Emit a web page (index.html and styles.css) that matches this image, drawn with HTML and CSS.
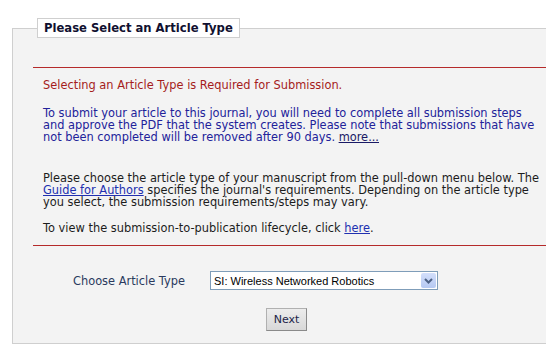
FILE: index.html
```html
<!DOCTYPE html>
<html lang="en">
<head>
    <meta charset="UTF-8">
    <title>Select Article Type</title>
    <link rel="stylesheet" href="styles.css">
</head>
<body>
    <fieldset class="panel">
        <legend>Please Select an Article Type</legend>
        <div class="notice">
            <p class="required">Selecting an Article Type is Required for Submission.</p>
            <p class="info">To submit your article to this journal, you will need to complete all submission steps and approve the PDF that the system creates. Please note that submissions that have not been completed will be removed after 90 days. <a href="#" class="more">more...</a></p>
            <p class="plain">Please choose the article type of your manuscript from the pull-down menu below. The <a href="#">Guide for Authors</a> specifies the journal's requirements. Depending on the article type you select, the submission requirements/steps may vary.</p>
            <p class="plain lifecycle">To view the submission-to-publication lifecycle, click <a href="#">here</a>.</p>
        </div>
        <form class="choose" onsubmit="event.preventDefault();">
            <div class="row">
                <label for="articleType">Choose Article Type</label>
                <div class="select">
                    <select id="articleType">
                        <option>SI: Wireless Networked Robotics</option>
                    </select>
                    <span class="arrow">
                        <svg width="9" height="6" viewBox="0 0 9 6"><path d="M1 1 L4.5 4.5 L8 1" fill="none" stroke="#4d6185" stroke-width="2"/></svg>
                    </span>
                </div>
            </div>
            <div class="actions">
                <button type="submit">Next</button>
            </div>
        </form>
    </fieldset>
</body>
</html>
```

FILE: styles.css
```css
body {
    margin: 0;
    background-color: #fff;
    font-family: "DejaVu Sans", Verdana, sans-serif;
    font-size: 11.4px;
    line-height: 12px;
}

.panel {
    margin: 18px 0 0 12px;
    padding: 0 0 12px 20px;
    border: 1px solid #cfcfcf;
    border-right: none;
    background-color: #f3f3f3;
}

.panel legend {
    margin-left: 4px;
    padding: 2px 6px 2px 6px;
    border: 1px solid #cfcfcf;
    background-color: #fff;
    color: #101030;
    font-size: 11.6px;
    font-weight: bold;
    line-height: 14px;
}

.notice {
    margin-top: 29px;
    padding: 11px 0 11px 10px;
    border-top: 1px solid #b52a2a;
    border-bottom: 1px solid #b52a2a;
}

.notice p {
    margin: 0;
    padding-right: 4px;
}

.required {
    color: #a51c1c;
}

.info {
    margin-top: 16px !important;
    color: #22229a;
}

.info .more {
    color: #1a1a66;
}

.plain {
    margin-top: 29px !important;
    color: #1c1c1c;
}

.plain.lifecycle {
    margin-top: 14px !important;
}

.plain a {
    color: #2130b0;
}

.choose {
    margin: 25px 0 0 0;
}

.row {
    display: flex;
    align-items: center;
    padding-left: 40px;
    gap: 22px;
}

.row label {
    width: 115px;
    white-space: nowrap;
    color: #2a3a5e;
}

.select {
    display: flex;
    align-items: center;
    width: 226px;
    height: 17px;
    border: 1px solid #7f9db9;
    background-color: #fff;
}

.select select {
    flex: 1;
    height: 17px;
    border: none;
    padding: 0 0 0 3px;
    background: transparent;
    appearance: none;
    font-family: "Liberation Sans", Arial, sans-serif;
    font-size: 11px;
    color: #000;
    outline: none;
}

.select .arrow {
    display: flex;
    align-items: center;
    justify-content: center;
    width: 15px;
    height: 15px;
    margin-right: 1px;
    border-radius: 2px;
    background: linear-gradient(#d3dffb, #b5c8f2);
}

.actions {
    margin-top: 18px;
    padding-left: 233px;
}

.actions button {
    width: 41px;
    height: 23px;
    padding: 0;
    border: 1px solid #b0b0b0;
    border-right-color: #8a8a8a;
    border-bottom-color: #8a8a8a;
    background: linear-gradient(#ececec, #d8d8d8);
    color: #1c2448;
    font-family: "DejaVu Sans", Verdana, sans-serif;
    font-size: 11px;
    cursor: pointer;
}
```
